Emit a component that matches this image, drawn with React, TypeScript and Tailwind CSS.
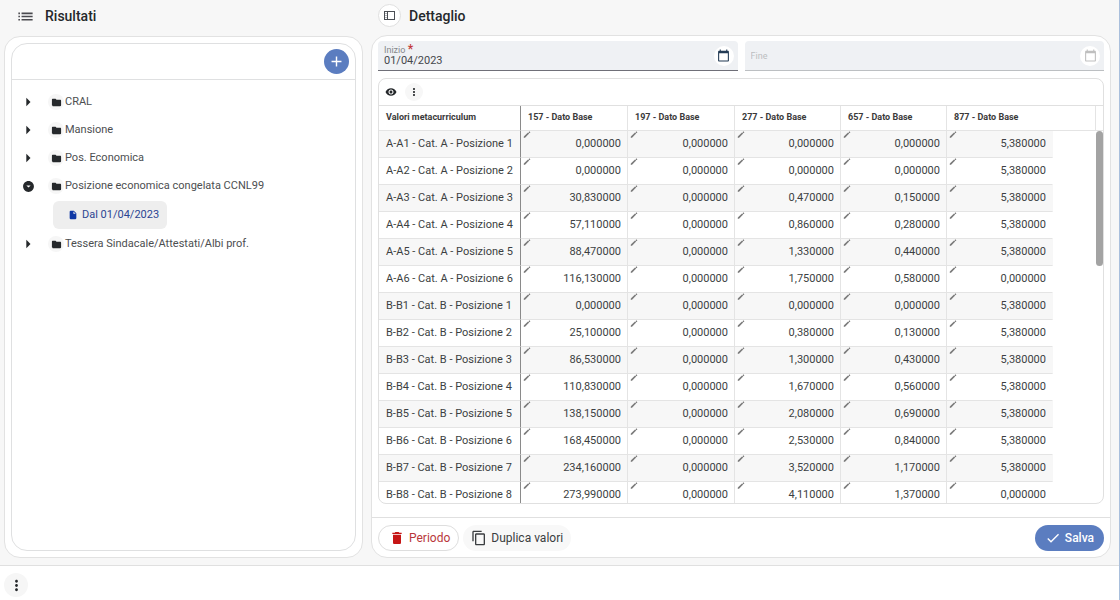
import React from "react";
import {
  MdAdd,
  MdArrowDropDownCircle,
  MdArrowRight,
  MdCalendarToday,
  MdCheck,
  MdContentCopy,
  MdDelete,
  MdFolder,
  MdInsertDriveFile,
  MdList,
  MdMoreVert,
  MdVisibility,
} from "react-icons/md";

const columns = ["157", "197", "277", "657", "877"];

const rows: [string, string[]][] = [
  ["A-A1 - Cat. A - Posizione 1", ["0,000000", "0,000000", "0,000000", "0,000000", "5,380000"]],
  ["A-A2 - Cat. A - Posizione 2", ["0,000000", "0,000000", "0,000000", "0,000000", "5,380000"]],
  ["A-A3 - Cat. A - Posizione 3", ["30,830000", "0,000000", "0,470000", "0,150000", "5,380000"]],
  ["A-A4 - Cat. A - Posizione 4", ["57,110000", "0,000000", "0,860000", "0,280000", "5,380000"]],
  ["A-A5 - Cat. A - Posizione 5", ["88,470000", "0,000000", "1,330000", "0,440000", "5,380000"]],
  ["A-A6 - Cat. A - Posizione 6", ["116,130000", "0,000000", "1,750000", "0,580000", "0,000000"]],
  ["B-B1 - Cat. B - Posizione 1", ["0,000000", "0,000000", "0,000000", "0,000000", "5,380000"]],
  ["B-B2 - Cat. B - Posizione 2", ["25,100000", "0,000000", "0,380000", "0,130000", "5,380000"]],
  ["B-B3 - Cat. B - Posizione 3", ["86,530000", "0,000000", "1,300000", "0,430000", "5,380000"]],
  ["B-B4 - Cat. B - Posizione 4", ["110,830000", "0,000000", "1,670000", "0,560000", "5,380000"]],
  ["B-B5 - Cat. B - Posizione 5", ["138,150000", "0,000000", "2,080000", "0,690000", "5,380000"]],
  ["B-B6 - Cat. B - Posizione 6", ["168,450000", "0,000000", "2,530000", "0,840000", "5,380000"]],
  ["B-B7 - Cat. B - Posizione 7", ["234,160000", "0,000000", "3,520000", "1,170000", "5,380000"]],
  ["B-B8 - Cat. B - Posizione 8", ["273,990000", "0,000000", "4,110000", "1,370000", "0,000000"]],
];

function EditMark() {
  return (
    <svg
      width="8"
      height="8"
      viewBox="0 0 8 8"
      className="absolute left-0.5 top-0 text-[#7a7a7a]"
      aria-hidden="true"
    >
      <path d="M1.4 6.2L5.6 2" stroke="currentColor" strokeWidth="1.7" />
      <path d="M6 1.7L6.9 0.9" stroke="currentColor" strokeWidth="1.5" />
      <path d="M0.8 6.9V5.5L2.2 6.9Z" fill="currentColor" />
    </svg>
  );
}

function TreeItem({ label, open = false, children }: { label: string; open?: boolean; children?: React.ReactNode }) {
  return (
    <li>
      <div className="flex h-7 items-center">
        <button
          type="button"
          aria-label={`${open ? "Chiudi" : "Apri"} ${label}`}
          aria-expanded={open}
          className="flex w-8 justify-center text-[#25282b]"
        >
          {open ? <MdArrowDropDownCircle size={13} /> : <MdArrowRight size={20} />}
        </button>
        <span className="ml-1 flex size-4 items-center justify-center rounded-full bg-[#f6f6f6]">
          <MdFolder size={11} className="text-[#25282b]" />
        </span>
        <span className="ml-px">{label}</span>
      </div>
      {children}
    </li>
  );
}

function DateField({
  id,
  label,
  value,
  required = false,
  disabled = false,
}: {
  id: string;
  label: string;
  value?: string;
  required?: boolean;
  disabled?: boolean;
}) {
  return (
    <div
      className={`flex h-[30px] min-w-0 flex-1 items-center rounded-t border-b pl-1.5 pr-1 ${
        disabled ? "border-[#bcbfc2] bg-[#eff1f4]" : "border-[#6f6f78] bg-[#eff1f4]"
      }`}
    >
      <div className="flex min-w-0 flex-1 flex-col">
        {disabled ? (
          <input
            id={id}
            disabled
            aria-label={label}
            placeholder={label}
            className="h-4 w-full bg-transparent text-[9px] leading-4 placeholder:text-[#bcbec0]"
          />
        ) : (
          <>
            <label htmlFor={id} className="mt-px text-[9px] leading-[10px] text-[#85878a]">
              {label} {required && <span className="text-xs font-bold leading-[8px] text-[#c33a3a]">*</span>}
            </label>
            <input
              id={id}
              defaultValue={value}
              className="w-full bg-transparent text-[11px] leading-3 text-[#45484c] outline-none"
            />
          </>
        )}
      </div>
      <button
        type="button"
        disabled={disabled}
        aria-label={`Calendario ${label}`}
        className={`flex size-5 items-center justify-center rounded-full bg-white ${
          disabled ? "text-[#bfbfbf]" : "text-[#233b55]"
        }`}
      >
        <MdCalendarToday size={13} />
      </button>
    </div>
  );
}

export default function App() {
  return (
    <div className="flex h-screen flex-col border-r border-[#a9bfdc] bg-[#f7f7f7] font-[Roboto,sans-serif] text-[#25282b]">
      <main className="grid min-h-0 flex-1 grid-cols-[359fr_740fr] gap-2 pb-[7px] pl-1 pr-2">
        <section className="flex min-h-0 min-w-0 flex-col">
          <h1 className="flex h-9 shrink-0 items-center gap-2.5 pb-1 pl-3 text-sm font-medium">
            <MdList size={19} className="text-[#4a4a4f]" />
            Risultati
          </h1>
          <div className="flex min-h-0 flex-1 flex-col rounded-2xl border border-[#e2e2e2] bg-white p-1.5">
            <div className="flex min-h-0 flex-1 flex-col rounded-2xl border border-[#dfe0e1]">
              <div className="flex h-9 shrink-0 items-center justify-end border-b border-[#dfe0e1] pr-1.5">
                <button
                  type="button"
                  aria-label="Aggiungi"
                  className="flex size-[25px] items-center justify-center rounded-full bg-[#5b7dc0] text-white"
                >
                  <MdAdd size={17} />
                </button>
              </div>
              <ul className="pt-2 text-[11px] text-[#4c4e50]">
                <TreeItem label="CRAL" />
                <TreeItem label="Mansione" />
                <TreeItem label="Pos. Economica" />
                <TreeItem label="Posizione economica congelata CCNL99" open>
                  <ul className="my-px ml-[41px]">
                    <li>
                      <button
                        type="button"
                        className="flex h-7 items-center gap-1 rounded-md bg-[#eeeeee] pl-[15px] pr-2 text-[#2c4592]"
                      >
                        <MdInsertDriveFile size={10} className="text-[#0e37a5]" />
                        Dal 01/04/2023
                      </button>
                    </li>
                  </ul>
                </TreeItem>
                <TreeItem label="Tessera Sindacale/Attestati/Albi prof." />
              </ul>
            </div>
          </div>
        </section>

        <section className="flex min-h-0 min-w-0 flex-col">
          <h2 className="flex h-[35px] shrink-0 items-center gap-2 pb-1 pl-[7px] text-sm font-medium">
            <button
              type="button"
              aria-label="Mostra pannello"
              className="flex size-[23px] items-center justify-center rounded-full border border-[#e0e0e0] bg-white"
            >
              <svg width="11" height="9" viewBox="0 0 11 9" fill="none" stroke="#4b4f55" aria-hidden="true">
                <rect x="0.5" y="0.5" width="10" height="8" />
                <path d="M3.5 0.5v8" />
                <path d="M1 2.5h2M1 4.5h2M1 6.5h2" stroke="#b5b7ba" />
              </svg>
            </button>
            Dettaglio
          </h2>
          <div className="flex min-h-0 flex-1 flex-col rounded-2xl border border-[#e2e2e2] bg-white">
            <div className="flex min-h-0 flex-1 flex-col gap-[7px] px-1.5 pt-[5px]">
              <div className="flex shrink-0 gap-[7px]">
                <DateField id="inizio" label="Inizio" value="01/04/2023" required />
                <DateField id="fine" label="Fine" disabled />
              </div>

              <div className="mb-[13px] flex min-h-0 flex-1 flex-col overflow-hidden rounded-lg border border-[#e0e0e0]">
                <div className="flex h-[27px] shrink-0 items-center gap-2 border-b border-[#e0e0e0] pl-1.5">
                  <button type="button" aria-label="Visualizza colonne">
                    <MdVisibility size={12} />
                  </button>
                  <button
                    type="button"
                    aria-label="Altre opzioni"
                    className="flex size-[18px] items-center justify-center rounded-full bg-[#f7f7f7]"
                  >
                    <MdMoreVert size={12} />
                  </button>
                </div>
                <div className="flex min-h-0 flex-1">
                  <div className="min-w-0 flex-1 overflow-y-auto [scrollbar-width:none]">
                    <table className="w-full table-fixed border-separate border-spacing-0 text-[11px] text-[#3c3f42]">
                      <colgroup>
                        <col className="w-[142px]" />
                        <col className="w-[107px]" />
                        <col className="w-[107px]" />
                        <col className="w-[106px]" />
                        <col className="w-[106px]" />
                        <col className="w-[106px]" />
                        <col />
                      </colgroup>
                      <thead>
                        <tr className="h-[25px] text-left text-[9px] text-[#3a3a3a]">
                          <th scope="col" className="sticky top-0 z-10 border-b border-r border-b-[#e4e4e4] border-r-[#8a8a8a] bg-white p-0 pl-[7px]">
                            Valori metacurriculum
                          </th>
                          {columns.map((c, i) => (
                            <th
                              key={c}
                              scope="col"
                              colSpan={i === 4 ? 2 : 1}
                              className="sticky top-0 z-10 border-b border-r border-[#e4e4e4] bg-white p-0 pl-[7px]"
                            >
                              {c} - Dato Base
                            </th>
                          ))}
                        </tr>
                      </thead>
                      <tbody>
                        {rows.map(([name, values]) => (
                          <tr key={name} className="group h-[27px]">
                            <th
                              scope="row"
                              className="whitespace-nowrap border-b border-r border-b-[#e4e4e4] border-r-[#8a8a8a] p-0 pl-[7px] text-left font-normal group-odd:bg-[#f7f7f7]"
                            >
                              {name}
                            </th>
                            {values.map((v, i) => (
                              <td
                                key={i}
                                className="relative border-b border-r border-[#e4e4e4] p-0 pr-1.5 text-right group-odd:bg-[#f7f7f7] nth-[6]:border-r-transparent"
                              >
                                <EditMark />
                                {v}
                              </td>
                            ))}
                            <td className="p-0" />
                          </tr>
                        ))}
                      </tbody>
                    </table>
                  </div>
                  <div className="flex w-[7px] flex-col">
                    <div className="h-[25px] border-b border-[#e4e4e4]" />
                    <div className="h-[34%] rounded-full bg-[#a3a3a3]" />
                  </div>
                </div>
              </div>
            </div>

            <div className="flex h-10 shrink-0 items-center border-t border-[#e0e0e0] px-1.5">
              <button
                type="button"
                className="flex h-[26px] items-center gap-1 rounded-full border border-[#dedede] pl-2.5 pr-2 text-xs text-[#b9373a]"
              >
                <MdDelete size={16} className="text-[#c61616]" />
                Periodo
              </button>
              <button
                type="button"
                className="ml-1 flex h-[26px] items-center gap-1 rounded-full bg-[#f8f8f8] px-2 text-xs text-[#3a3d40]"
              >
                <MdContentCopy size={16} />
                Duplica valori
              </button>
              <button
                type="button"
                className="ml-auto flex h-[26px] items-center gap-1 rounded-full bg-[#5b7dc0] px-2.5 text-xs font-medium text-white"
              >
                <MdCheck size={16} />
                Salva
              </button>
            </div>
          </div>
        </section>
      </main>

      <footer className="flex h-[35px] shrink-0 items-center border-t border-[#e0e0e0] bg-white pl-1 pt-1">
        <button
          type="button"
          aria-label="Menu"
          className="flex size-6 items-center justify-center rounded-full bg-[#f6f6f6]"
        >
          <MdMoreVert size={17} />
        </button>
      </footer>
    </div>
  );
}
